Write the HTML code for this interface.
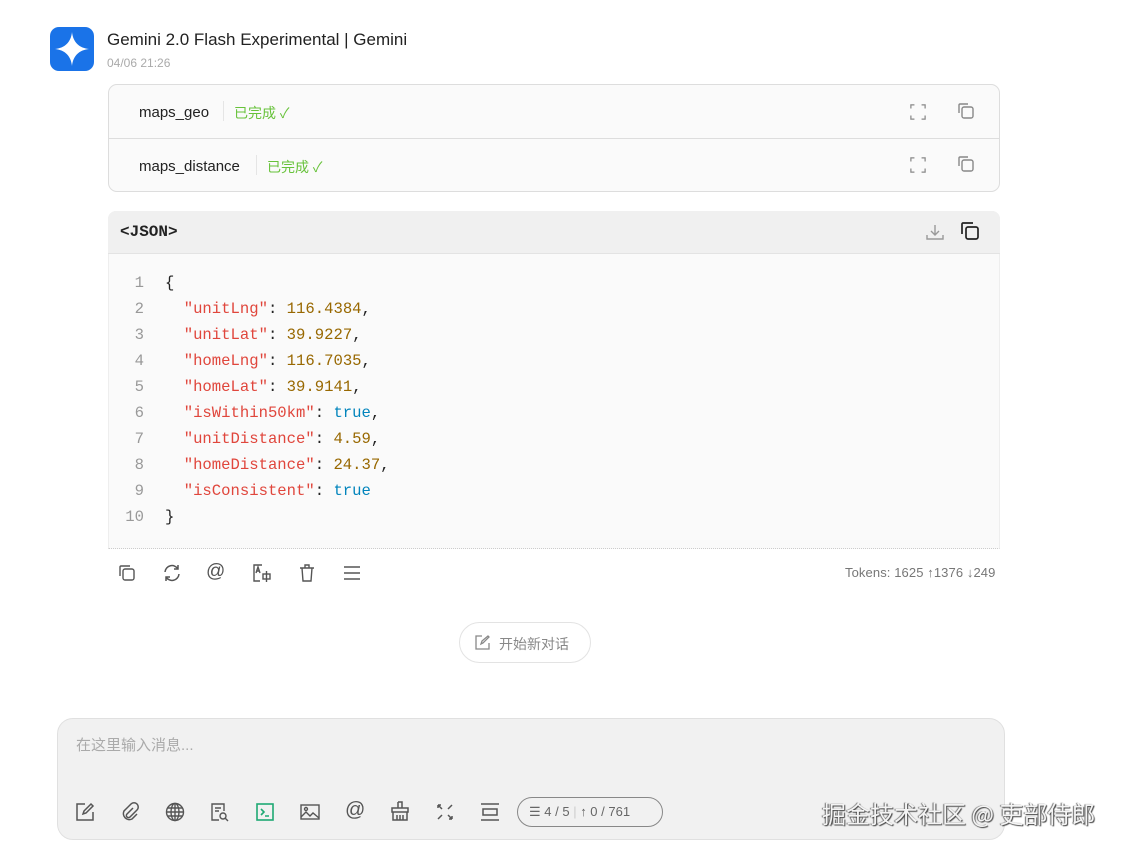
<!DOCTYPE html>
<html><head><meta charset="utf-8"><style>
*{box-sizing:border-box;margin:0;padding:0}
body{width:1130px;height:849px;background:#fff;font-family:"Liberation Sans","Noto Sans CJK SC",sans-serif;position:relative;overflow:hidden;color:#222}
.abs{position:absolute}
.ic{position:absolute}
svg{display:block}
.code{font-family:"Liberation Mono","DejaVu Sans Mono",monospace;font-size:15.6px}
.ln{position:absolute;left:116px;width:28px;text-align:right;color:#999}
.cl{position:absolute;left:165px;white-space:pre}
.k{color:#e0463c}.n{color:#986801}.b{color:#0184bc}
</style></head><body>
<div class="abs" style="left:50px;top:27px;width:44px;height:44px;border-radius:9px;background:#1a73e8;">
<svg width="44" height="44" viewBox="0 0 44 44"><path d="M22 5 C23 15 29 21 39 22 C29 23 23 29 22 39 C21 29 15 23 5 22 C15 21 21 15 22 5Z" fill="#fff"/></svg></div>
<div class="abs" style="left:107px;top:30px;font-size:17px;color:#222">Gemini 2.0 Flash Experimental | Gemini</div>
<div class="abs" style="left:107px;top:56px;font-size:12px;color:#aaa">04/06 21:26</div>

<div class="abs" style="left:108px;top:84px;width:892px;height:108px;border:1px solid #ddd;border-radius:9px;background:#fafafa"></div>
<div class="abs" style="left:109px;top:138px;width:890px;height:1px;background:#ddd"></div>
<div class="abs" style="left:139px;top:104px;font-size:15px">maps_geo</div>
<div class="abs" style="left:223px;top:101px;width:1px;height:20px;background:#e5e5e5"></div>
<div class="abs" style="left:234px;top:103px;font-size:14px;color:#67c23a">已完成 ✓</div>
<div class="abs" style="left:139px;top:158px;font-size:15px">maps_distance</div>
<div class="abs" style="left:256px;top:155px;width:1px;height:20px;background:#e5e5e5"></div>
<div class="abs" style="left:267px;top:157px;font-size:14px;color:#67c23a">已完成 ✓</div>
<svg class="ic" style="left:910px;top:104px" width="16" height="16" viewBox="0 0 18 18" fill="none" stroke="#888" stroke-width="1.4"><path d="M1 5V1h4M13 1h4v4M17 13v4h-4M5 17H1v-4"/></svg>
<svg class="ic" style="left:910px;top:157px" width="16" height="16" viewBox="0 0 18 18" fill="none" stroke="#888" stroke-width="1.4"><path d="M1 5V1h4M13 1h4v4M17 13v4h-4M5 17H1v-4"/></svg>
<svg class="ic" style="left:957px;top:102px" width="18" height="18" viewBox="0 0 18 18" fill="none" stroke="#888" stroke-width="1.4"><rect x="5" y="5" width="11" height="11" rx="2"/><path d="M2 11V3a1 1 0 0 1 1-1h8"/></svg>
<svg class="ic" style="left:957px;top:155px" width="18" height="18" viewBox="0 0 18 18" fill="none" stroke="#888" stroke-width="1.4"><rect x="5" y="5" width="11" height="11" rx="2"/><path d="M2 11V3a1 1 0 0 1 1-1h8"/></svg>

<div class="abs" style="left:108px;top:211px;width:892px;height:338px;border:1px solid #eee;border-radius:8px 8px 0 0;background:#fafafa;border-bottom:1px dotted #ccc"></div>
<div class="abs" style="left:108px;top:211px;width:892px;height:43px;background:#f0f0f0;border-radius:8px 8px 0 0;border-bottom:1px solid #e3e3e3"></div>
<div class="abs code" style="left:120px;top:223px;font-weight:bold;font-size:16px;color:#222">&lt;JSON&gt;</div>
<svg class="ic" style="left:925px;top:222px" width="20" height="20" viewBox="0 0 20 20" fill="none" stroke="#999" stroke-width="1.4"><path d="M10 3v10M6 9l4 4 4-4M2 13v4h16v-4"/></svg>
<svg class="ic" style="left:960px;top:221px" width="20" height="20" viewBox="0 0 20 20" fill="none" stroke="#222" stroke-width="1.7"><rect x="6" y="6" width="12" height="12" rx="2"/><path d="M2 13V3a1 1 0 0 1 1-1h10"/></svg>

<div class="code">
<div class="ln" style="top:274px">1</div><div class="cl" style="top:274px">{</div>
<div class="ln" style="top:300px">2</div><div class="cl" style="top:300px">  <span class="k">"unitLng"</span>: <span class="n">116.4384</span>,</div>
<div class="ln" style="top:326px">3</div><div class="cl" style="top:326px">  <span class="k">"unitLat"</span>: <span class="n">39.9227</span>,</div>
<div class="ln" style="top:352px">4</div><div class="cl" style="top:352px">  <span class="k">"homeLng"</span>: <span class="n">116.7035</span>,</div>
<div class="ln" style="top:378px">5</div><div class="cl" style="top:378px">  <span class="k">"homeLat"</span>: <span class="n">39.9141</span>,</div>
<div class="ln" style="top:404px">6</div><div class="cl" style="top:404px">  <span class="k">"isWithin50km"</span>: <span class="b">true</span>,</div>
<div class="ln" style="top:430px">7</div><div class="cl" style="top:430px">  <span class="k">"unitDistance"</span>: <span class="n">4.59</span>,</div>
<div class="ln" style="top:456px">8</div><div class="cl" style="top:456px">  <span class="k">"homeDistance"</span>: <span class="n">24.37</span>,</div>
<div class="ln" style="top:482px">9</div><div class="cl" style="top:482px">  <span class="k">"isConsistent"</span>: <span class="b">true</span></div>
<div class="ln" style="top:508px">10</div><div class="cl" style="top:508px">}</div>
</div>

<svg class="ic" style="left:117px;top:563px" width="20" height="20" viewBox="0 0 20 20" fill="none" stroke="#555" stroke-width="1.4"><rect x="6" y="6" width="11" height="11" rx="2"/><path d="M3 13V4a1 1 0 0 1 1-1h9"/></svg>
<svg class="ic" style="left:162px;top:563px" width="20" height="20" viewBox="0 0 20 20" fill="none" stroke="#555" stroke-width="1.5"><path d="M3 9a7 7 0 0 1 13-3M17 11a7 7 0 0 1-13 3M16 2v4h-4M4 18v-4h4"/></svg>
<div class="abs" style="left:206px;top:561px;font-size:19px;color:#555">@</div>
<svg class="ic" style="left:252px;top:563px" width="20" height="20" viewBox="0 0 20 20" fill="none" stroke="#555" stroke-width="1.4"><path d="M10 2H2v16h6"/><path d="M4 10l2-6 2 6M5 8h2"/><rect x="11" y="11" width="7" height="5"/><path d="M14.5 8v11"/></svg>
<svg class="ic" style="left:297px;top:563px" width="20" height="20" viewBox="0 0 20 20" fill="none" stroke="#555" stroke-width="1.4"><path d="M3 5h14M8 5V2h4v3M5 5l1 13h8l1-13"/></svg>
<svg class="ic" style="left:342px;top:563px" width="20" height="20" viewBox="0 0 20 20" fill="none" stroke="#555" stroke-width="1.5"><path d="M2 4h16M2 10h16M2 16h16"/></svg>
<div class="abs" style="left:845px;top:565px;font-size:13px;color:#777;letter-spacing:0.1px">Tokens: 1625 ↑1376 ↓249</div>

<div class="abs" style="left:459px;top:622px;width:132px;height:41px;border:1px solid #e3e3e3;border-radius:21px"></div>
<svg class="ic" style="left:475px;top:635px" width="15" height="15" viewBox="0 0 15 15" fill="none" stroke="#888" stroke-width="1.3"><path d="M7 1H1v13h13V8M6 9l1-3 6-5 1 1-6 6z"/></svg>
<div class="abs" style="left:499px;top:634px;font-size:14px;color:#888">开始新对话</div>

<div class="abs" style="left:57px;top:718px;width:948px;height:122px;background:#f1f1f1;border:1px solid #e0e0e0;border-radius:16px"></div>
<div class="abs" style="left:76px;top:734px;font-size:15px;color:#aaa">在这里输入消息...</div>
<svg class="ic" style="left:75px;top:802px" width="20" height="20" viewBox="0 0 20 20" fill="none" stroke="#555" stroke-width="1.5"><path d="M10 2H2v16h16v-8M8 12l1-3 7-7 2 2-7 7z"/></svg>
<svg class="ic" style="left:120px;top:802px" width="20" height="20" viewBox="0 0 20 20" fill="none" stroke="#555" stroke-width="1.5"><path d="M13 6l-6 6a2 2 0 0 0 3 3l7-7a4 4 0 0 0-6-6L4 9a6 6 0 0 0 8 8l5-5"/></svg>
<svg class="ic" style="left:165px;top:802px" width="20" height="20" viewBox="0 0 20 20" fill="none" stroke="#555" stroke-width="1.4"><circle cx="10" cy="10" r="8.5"/><ellipse cx="10" cy="10" rx="4" ry="8.5"/><path d="M1.5 10h17M3 6h14M3 14h14M10 1.5v17"/></svg>
<svg class="ic" style="left:210px;top:802px" width="20" height="20" viewBox="0 0 20 20" fill="none" stroke="#555" stroke-width="1.4"><path d="M9 18H2V2h12v7M5 6h6M5 9h4"/><circle cx="13" cy="14" r="3"/><path d="M15 16l3 3"/></svg>
<svg class="ic" style="left:255px;top:802px" width="20" height="20" viewBox="0 0 20 20" fill="none" stroke="#1fa974" stroke-width="1.6"><rect x="2" y="2" width="16" height="16"/><path d="M6 7l3 3-3 3M10 14h4"/></svg>
<svg class="ic" style="left:300px;top:802px" width="20" height="20" viewBox="0 0 20 20" fill="none" stroke="#555" stroke-width="1.4"><rect x="1" y="3" width="18" height="14"/><circle cx="6" cy="7" r="1.5"/><path d="M1 15l5-5 4 4 3-3 6 5"/></svg>
<div class="abs" style="left:345px;top:799px;font-size:20px;color:#555">@</div>
<svg class="ic" style="left:390px;top:801px" width="20" height="20" viewBox="0 0 20 20" fill="none" stroke="#555" stroke-width="1.5"><path d="M8 1h4v6M8 1v6M2 7h16v4H2zM3 11v8h14v-8M7 14v5M10 14v5M13 14v5"/></svg>
<svg class="ic" style="left:435px;top:802px" width="20" height="20" viewBox="0 0 20 20" fill="none" stroke="#555" stroke-width="1.5"><path d="M3 3l4 4M17 3l-4 4M3 17l4-4M17 17l-4-4M3 3h3M3 3v3M17 17h-3M17 17v-3"/></svg>
<svg class="ic" style="left:480px;top:802px" width="20" height="20" viewBox="0 0 20 20" fill="none" stroke="#555" stroke-width="1.5"><path d="M1 2h18M1 18h18"/><rect x="3" y="7" width="14" height="6"/></svg>
<div class="abs" style="left:517px;top:797px;width:146px;height:30px;border:1px solid #888;border-radius:15px"></div>
<div class="abs" style="left:529px;top:804px;font-size:13px;color:#666">☰ 4 / 5 <span style="color:#ccc">|</span> ↑ 0 / 761</div>

<div class="abs" style="left:822px;top:795px;font-size:24px;color:#f4f4f4;text-shadow:1px 1px 1px #444,-1px 0 1px #666;font-family:'Noto Sans CJK SC',sans-serif">掘金技术社区 @ 吏部侍郎</div>
</body></html>
